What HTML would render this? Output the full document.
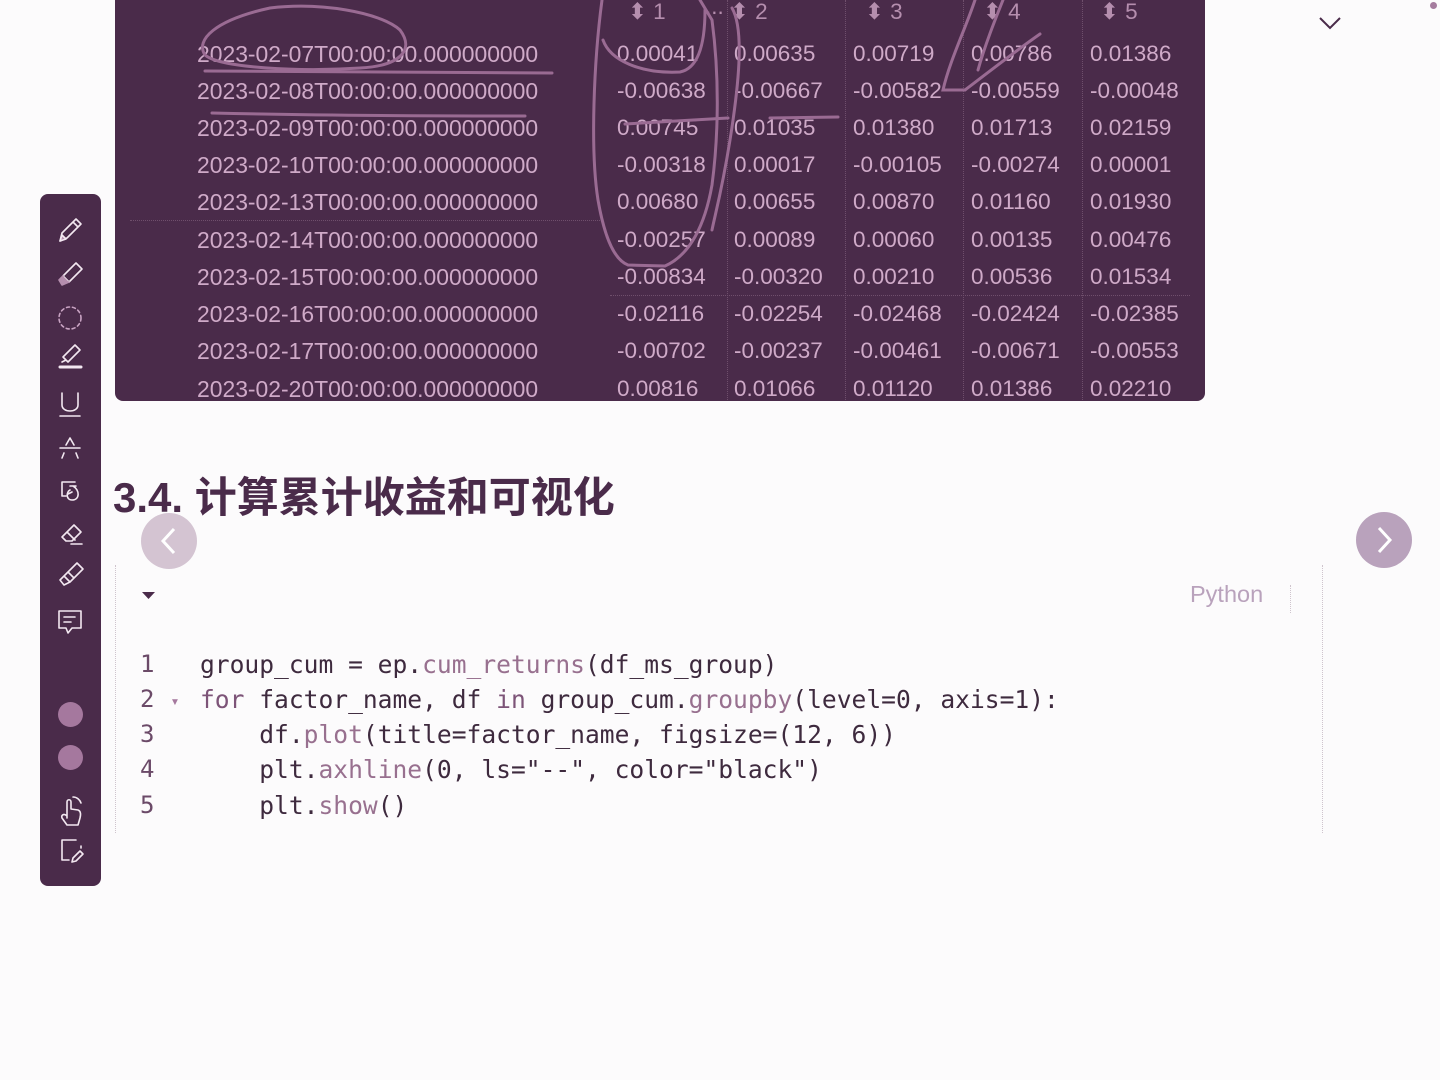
<!DOCTYPE html>
<html><head><meta charset="utf-8">
<style>
html,body{margin:0;padding:0;width:1440px;height:1080px;background:#fcfbfc;overflow:hidden;position:relative;font-family:"Liberation Sans","Noto Sans CJK SC",sans-serif}
.panel{position:absolute;left:115px;top:0;width:1090px;height:401px;background:#4a2b4a;border-radius:0 0 8px 8px}
.t{position:absolute;color:#cfaac8;font-size:22.5px;white-space:nowrap;line-height:24px}
.d{font-size:22.9px}
.vl{position:absolute;top:0;width:0;height:400px;border-left:1px dotted #6f4f6c}
.hl{position:absolute;height:0;border-top:1px dotted #6f4f6c}
.side{position:absolute;left:40px;top:194px;width:61px;height:692px;background:#4a2b4a;border-radius:8px}
.side svg{position:absolute;left:0;top:0}
h2{position:absolute;left:113px;top:470px;margin:0;font-size:42px;font-weight:bold;color:#4a2b4a;letter-spacing:0;font-family:"Liberation Sans","Noto Sans CJK SC",sans-serif;line-height:56px}
.code{position:absolute;left:115px;top:565px;width:1206px;height:268px;border-left:1px dotted #cfc4cd;border-right:1px dotted #cfc4cd}
.ln{position:absolute;left:140px;font-family:"DejaVu Sans Mono",monospace;font-size:24px;color:#6b4a68;line-height:35px}
.cl{position:absolute;left:200px;font-family:"DejaVu Sans Mono",monospace;font-size:24.6px;color:#3e2a3e;line-height:35px;white-space:pre}
.f{color:#98708f}
.k{color:#7d5478}
</style></head><body>
<div class="panel"></div>
<div class="vl" style="left:727px"></div>
<div class="vl" style="left:845px"></div>
<div class="vl" style="left:963px"></div>
<div class="vl" style="left:1082px"></div>
<div class="hl" style="left:130px;top:220px;width:470px"></div>
<div class="hl" style="left:610px;top:295px;width:580px"></div>

<div class="t" style="left:628px;top:0px;color:#b58eae">⬍ 1</div>
<div class="t" style="left:705px;top:0px;color:#b58eae">∙∙∙ ⬍ 2</div>
<div class="t" style="left:865px;top:0px;color:#b58eae">⬍ 3</div>
<div class="t" style="left:983px;top:0px;color:#b58eae">⬍ 4</div>
<div class="t" style="left:1100px;top:0px;color:#b58eae">⬍ 5</div>

<div class="t d" style="left:197px;top:42px">2023-02-07T00:00:00.000000000</div>
<div class="t d" style="left:197px;top:79px">2023-02-08T00:00:00.000000000</div>
<div class="t d" style="left:197px;top:116px">2023-02-09T00:00:00.000000000</div>
<div class="t d" style="left:197px;top:153px">2023-02-10T00:00:00.000000000</div>
<div class="t d" style="left:197px;top:190px">2023-02-13T00:00:00.000000000</div>
<div class="t d" style="left:197px;top:228px">2023-02-14T00:00:00.000000000</div>
<div class="t d" style="left:197px;top:265px">2023-02-15T00:00:00.000000000</div>
<div class="t d" style="left:197px;top:302px">2023-02-16T00:00:00.000000000</div>
<div class="t d" style="left:197px;top:339px">2023-02-17T00:00:00.000000000</div>
<div class="t d" style="left:197px;top:377px">2023-02-20T00:00:00.000000000</div>

<div class="t" style="left:617px;top:42px">0.00041</div><div class="t" style="left:734px;top:42px">0.00635</div><div class="t" style="left:853px;top:42px">0.00719</div><div class="t" style="left:971px;top:42px">0.00786</div><div class="t" style="left:1090px;top:42px">0.01386</div>
<div class="t" style="left:617px;top:79px">-0.00638</div><div class="t" style="left:734px;top:79px">-0.00667</div><div class="t" style="left:853px;top:79px">-0.00582</div><div class="t" style="left:971px;top:79px">-0.00559</div><div class="t" style="left:1090px;top:79px">-0.00048</div>
<div class="t" style="left:617px;top:116px">0.00745</div><div class="t" style="left:734px;top:116px">0.01035</div><div class="t" style="left:853px;top:116px">0.01380</div><div class="t" style="left:971px;top:116px">0.01713</div><div class="t" style="left:1090px;top:116px">0.02159</div>
<div class="t" style="left:617px;top:153px">-0.00318</div><div class="t" style="left:734px;top:153px">0.00017</div><div class="t" style="left:853px;top:153px">-0.00105</div><div class="t" style="left:971px;top:153px">-0.00274</div><div class="t" style="left:1090px;top:153px">0.00001</div>
<div class="t" style="left:617px;top:190px">0.00680</div><div class="t" style="left:734px;top:190px">0.00655</div><div class="t" style="left:853px;top:190px">0.00870</div><div class="t" style="left:971px;top:190px">0.01160</div><div class="t" style="left:1090px;top:190px">0.01930</div>
<div class="t" style="left:617px;top:228px">-0.00257</div><div class="t" style="left:734px;top:228px">0.00089</div><div class="t" style="left:853px;top:228px">0.00060</div><div class="t" style="left:971px;top:228px">0.00135</div><div class="t" style="left:1090px;top:228px">0.00476</div>
<div class="t" style="left:617px;top:265px">-0.00834</div><div class="t" style="left:734px;top:265px">-0.00320</div><div class="t" style="left:853px;top:265px">0.00210</div><div class="t" style="left:971px;top:265px">0.00536</div><div class="t" style="left:1090px;top:265px">0.01534</div>
<div class="t" style="left:617px;top:302px">-0.02116</div><div class="t" style="left:734px;top:302px">-0.02254</div><div class="t" style="left:853px;top:302px">-0.02468</div><div class="t" style="left:971px;top:302px">-0.02424</div><div class="t" style="left:1090px;top:302px">-0.02385</div>
<div class="t" style="left:617px;top:339px">-0.00702</div><div class="t" style="left:734px;top:339px">-0.00237</div><div class="t" style="left:853px;top:339px">-0.00461</div><div class="t" style="left:971px;top:339px">-0.00671</div><div class="t" style="left:1090px;top:339px">-0.00553</div>
<div class="t" style="left:617px;top:377px">0.00816</div><div class="t" style="left:734px;top:377px">0.01066</div><div class="t" style="left:853px;top:377px">0.01120</div><div class="t" style="left:971px;top:377px">0.01386</div><div class="t" style="left:1090px;top:377px">0.02210</div>

<svg style="position:absolute;left:0;top:0" width="1440" height="420">
<g fill="none" stroke="#9a6b93" stroke-width="3" stroke-linecap="round">
<path d="M270 8 C 320 2, 380 12, 400 30 C 415 50, 400 66, 360 68 C 300 72, 220 68, 205 55 C 195 40, 215 20, 270 8"/>
<path d="M205 71 L 552 73"/>
<path d="M212 113 C 300 115, 420 116, 525 116"/>
<path d="M602 0 C 594 60, 590 150, 598 200 C 605 240, 615 260, 628 265 L 665 266 C 690 255, 705 225, 712 185 C 718 140, 720 80, 712 20 L 700 0"/>
<path d="M603 40 C 610 60, 640 74, 680 72 C 700 68, 705 40, 705 10"/>
<path d="M625 124 L 728 118"/>
<path d="M732 8 C 745 30, 738 90, 730 140 C 722 190, 715 215, 712 230"/>
<path d="M770 118 L 838 117"/>
<path d="M975 0 C 965 30, 950 60, 943 90 L 965 90 C 985 75, 1010 55, 1040 34"/>
<path d="M1003 0 C 995 20, 985 45, 978 70"/>
</g>
</svg>

<svg style="position:absolute;left:1318px;top:16px" width="24" height="16"><path d="M2 2 L12 12 L22 2" fill="none" stroke="#4a2b4a" stroke-width="2"/></svg>
<div style="position:absolute;left:1430px;top:2px;width:7px;height:7px;border-radius:50%;background:#a57c9e"></div>

<div class="side">
<svg width="61" height="692" fill="none" stroke="#f3e8f1" stroke-width="1.6" stroke-linejoin="round" stroke-linecap="round">
<path d="M20 47 L22 39 L36 25 L41 30 L27 44 Z M33 28 L38 33"/>
<path d="M20 47 L22 41 L26 45 Z" fill="#b58eae"/>
<path d="M23 82 L36 69 L42 75 L29 88 Z"/>
<path d="M23 82 L19 86 L22 91 L29 88" fill="#b58eae" stroke="#b58eae"/>
<circle cx="30" cy="124" r="11" stroke-dasharray="3 3" stroke="#c9a3c3"/>
<path d="M23 163 L35 151 L40 156 L28 168 Z M22 168 L26 166"/>
<path d="M20 173 L41 173" stroke-width="3"/>
<path d="M22 199 L22 211 C22 219 38 219 38 211 L38 199 M20 222 L40 222"/>
<path d="M26 251 L30 244 L34 251 M20 254 L40 254 M24 259 L22 264 M36 259 L38 264"/>
<path d="M35 288 L22 288 L22 302 L26 302 M30 292 L36 292 M33 292 C40 296 40 306 32 306 C26 306 26 298 30 296 M28 300 L32 298"/>
<path d="M22 343 L34 331 L41 338 L32 347 L26 347 Z M27 338 L35 346 M31 350 L42 350"/>
<path d="M24 382 L37 369 L43 375 L30 388 Z M24 382 L20 386 L24 391 L30 388 M28 378 L34 384"/>
<path d="M19 417 L41 417 L41 434 L32 434 L28 439 L26 434 L19 434 Z M24 423 L35 423 M24 428 L31 428"/>
<path d="M27 624 L27 608 C27 605 31 605 31 608 L31 615 L38 616 C41 617 41 620 40 624 L38 631 L27 631 L22 624 C21 621 24 619 27 622 M33 603 C37 603 40 606 41 609"/>
<path d="M36 646 L22 646 L22 666 L29 666 M41 652 L41 654 M33 664 L40 657 L43 660 L36 667 L32 668 Z"/>
</svg>
<div style="position:absolute;left:18px;top:508px;width:25px;height:25px;border-radius:50%;background:#a5789e"></div>
<div style="position:absolute;left:18px;top:551px;width:25px;height:25px;border-radius:50%;background:#a5789e"></div>
</div>

<h2>3.4. 计算累计收益和可视化</h2>

<div style="position:absolute;left:141px;top:513px;width:56px;height:56px;border-radius:50%;background:#d4c4d2"><svg width="56" height="56"><path d="M33 16 L22 28 L33 40" fill="none" stroke="#fff" stroke-width="3"/></svg></div>
<div style="position:absolute;left:1356px;top:512px;width:56px;height:56px;border-radius:50%;background:#b9a2bc"><svg width="56" height="56"><path d="M23 16 L34 28 L23 40" fill="none" stroke="#fff" stroke-width="3"/></svg></div>

<div class="code"></div>
<svg style="position:absolute;left:142px;top:592px" width="14" height="10"><path d="M0 0 L13 0 L6.5 7Z" fill="#4a2b4a"/></svg>
<div style="position:absolute;left:1190px;top:581px;font-size:23.5px;color:#b9a2bc">Python</div>
<div style="position:absolute;left:1290px;top:585px;height:28px;border-left:1px dotted #cfc4cd"></div>

<div class="ln" style="top:647px">1</div>
<div class="ln" style="top:682px">2</div>
<div style="position:absolute;left:170px;top:697px;font-size:10px;color:#a5789e">▼</div>
<div class="ln" style="top:717px">3</div>
<div class="ln" style="top:752px">4</div>
<div class="ln" style="top:788px">5</div>
<div class="cl" style="top:647px">group_cum = ep.<span class="f">cum_returns</span>(df_ms_group)</div>
<div class="cl" style="top:682px"><span class="k">for</span> factor_name, df <span class="k">in</span> group_cum.<span class="f">groupby</span>(level=0, axis=1):</div>
<div class="cl" style="top:717px">    df.<span class="f">plot</span>(title=factor_name, figsize=(12, 6))</div>
<div class="cl" style="top:752px">    plt.<span class="f">axhline</span>(0, ls="--", color="black")</div>
<div class="cl" style="top:788px">    plt.<span class="f">show</span>()</div>
</body></html>
